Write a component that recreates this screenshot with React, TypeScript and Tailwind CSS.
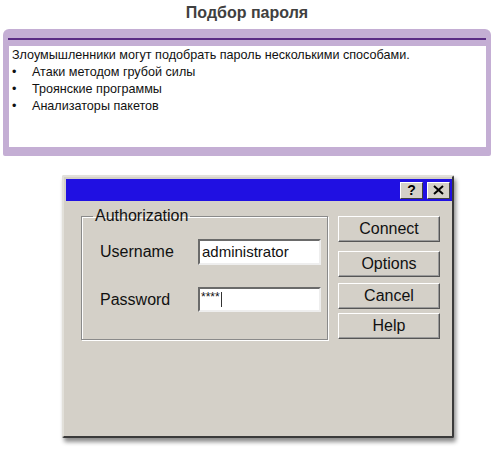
import React from "react";

const btn =
  "flex items-center justify-center w-[102px] bg-[#d4d0c8] border border-t-white border-l-white border-r-[#555] border-b-[#555] shadow-[inset_-1px_-1px_0_#9a9a9a] text-[16px] text-[#111]";

export default function App() {
  return (
    <div className="w-[494px] h-[457px] bg-white overflow-hidden font-['Liberation_Sans',Arial,sans-serif]">
      <div className="h-[29px] flex items-center justify-center text-[16px] font-bold text-[#404040] pb-[3px]">
        Подбор пароля
      </div>
      <div className="ml-[3px] w-[488px] h-[127px] bg-[#c4aed4] rounded-t-[6px] rounded-b-[2px] pt-[9px] pl-[6px] pr-[5px] pb-[9px] flex flex-col">
        <div className="h-[2px] bg-[#5a2c84] ml-[-1px] mr-0" />
        <div className="mt-[6px] flex-1 bg-white pl-[3px] pt-[1px] text-[12.6px] leading-[17px] text-[#111]">
          <div>Злоумышленники могут подобрать пароль несколькими способами.</div>
          {["Атаки методом грубой силы", "Троянские программы", "Анализаторы пакетов"].map((t) => (
            <div key={t} className="flex">
              <span className="w-[20px]">•</span>
              <span>{t}</span>
            </div>
          ))}
        </div>
      </div>

      <div className="ml-[62px] mt-[19px] w-[392px] h-[263px] bg-[#d4d0c8] border-2 border-t-[#e2e0da] border-l-[#e2e0da] border-r-[#3a3a3a] border-b-[#3a3a3a] rounded-[2px] pt-[2px] pl-[2px] shadow-[2px_4px_4px_rgba(0,0,0,0.45)] flex flex-col">
        <div className="h-[22px] bg-[#2010e2] flex items-center justify-end gap-[4px] pr-[2px]">
          <div className="w-[23px] h-[17px] bg-[#d4d0c8] border border-t-white border-l-white border-r-[#404040] border-b-[#404040] flex items-center justify-center text-[14px] font-bold text-black leading-none">
            ?
          </div>
          <div className="w-[23px] h-[17px] bg-[#d4d0c8] border border-t-white border-l-white border-r-[#404040] border-b-[#404040] flex items-center justify-center">
            <svg width="11" height="10" viewBox="0 0 11 10">
              <path d="M1 1 L10 9 M10 1 L1 9" stroke="#000" strokeWidth="2" />
            </svg>
          </div>
        </div>
        <div className="flex">
          <fieldset className="ml-[15px] mt-[6px] w-[247px] h-[133px] border border-[#8a8a8a] shadow-[inset_1px_1px_0_#fff,1px_1px_0_#fff]">
            <legend className="ml-[11px] px-[2px] text-[16px] leading-[18px] text-[#111]">Authorization</legend>
            <div className="pl-[18px] pt-[14px] flex flex-col gap-[22px] text-[16px] text-[#111]">
              <div className="flex items-center">
                <span className="w-[98px]">Username</span>
                <div className="w-[123px] h-[26px] bg-white border-2 border-t-[#6a6a6a] border-l-[#6a6a6a] border-r-[#eee] border-b-[#eee] flex items-center pl-[2px] text-[15px]">
                  administrator
                </div>
              </div>
              <div className="flex items-center">
                <span className="w-[98px]">Password</span>
                <div className="w-[123px] h-[25px] bg-white border-2 border-t-[#6a6a6a] border-l-[#6a6a6a] border-r-[#eee] border-b-[#eee] flex items-start pl-[1px] pt-[1px] text-[12px] leading-[14px]">
                  <span>****</span>
                  <span className="ml-[1px] mt-[2px] w-[1px] h-[15px] bg-[#333]" />
                </div>
              </div>
            </div>
          </fieldset>
          <div className="ml-[10px] mt-[15px] flex flex-col">
            <div className={btn + " h-[26px]"}>Connect</div>
            <div className={btn + " h-[26px] mt-[9px]"}>Options</div>
            <div className={btn + " h-[26px] mt-[6px]"}>Cancel</div>
            <div className={btn + " h-[26px] mt-[4px]"}>Help</div>
          </div>
        </div>
      </div>
    </div>
  );
}
